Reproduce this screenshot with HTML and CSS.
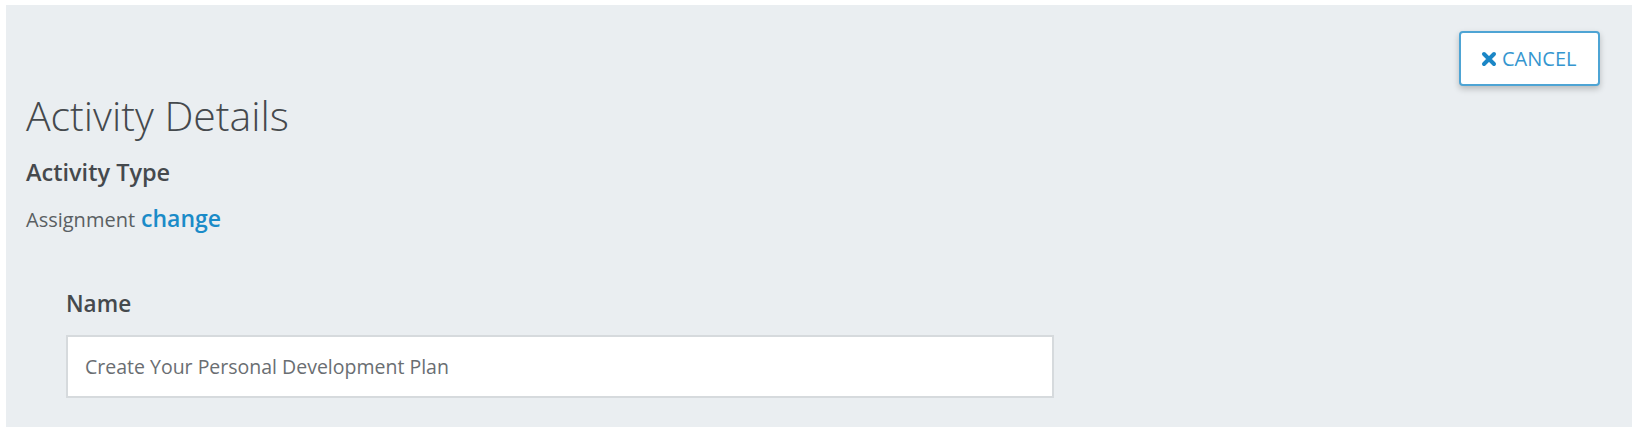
FILE: index.html
```
<!DOCTYPE html>
<html lang="en">
<head>
<meta charset="utf-8">
<title>Activity Details</title>
<link rel="stylesheet" href="styles.css">
</head>
<body>
<main class="panel">
  <div class="toolbar">
    <button class="cancel-btn" type="button">
      <svg class="cancel-icon" viewBox="0 0 16 16" width="16" height="16" aria-hidden="true">
        <path d="M3 3 L13 13 M13 3 L3 13" stroke="#1b86c6" stroke-width="4" stroke-linecap="round" fill="none"/>
      </svg>
      <span>CANCEL</span>
    </button>
  </div>
  <h1 class="title">Activity Details</h1>
  <h2 class="subtitle">Activity Type</h2>
  <p class="type-line"><span class="type-value">Assignment</span> <a class="change-link" href="#">change</a></p>
  <section class="form">
    <label class="field-label" for="name">Name</label>
    <input class="field-input" id="name" type="text" value="Create Your Personal Development Plan">
  </section>
</main>
</body>
</html>
```
FILE: styles.css
```
* { box-sizing: border-box; }
html, body { background: #ffffff; }
body {
  margin: 5px 8px 0 6px;
  font-family: "Open Sans", "Liberation Sans", sans-serif;
  color: #444a4f;
}
.panel {
  background: #eaeef1;
  height: 422px;
  padding: 26px 32px 29px 20px;
  display: flex;
  flex-direction: column;
}
.toolbar {
  display: flex;
  justify-content: flex-end;
}
.cancel-btn {
  width: 141px;
  height: 55px;
  background: #ffffff;
  border: 2px solid #4ea4d4;
  border-radius: 4px;
  box-shadow: 0 3px 6px rgba(0, 0, 0, 0.22);
  display: flex;
  align-items: center;
  gap: 5px;
  padding: 0 0 0 20px;
  font-family: "Open Sans", "Liberation Sans", sans-serif;
  font-size: 20px;
  color: #3596cf;
  cursor: pointer;
}
.cancel-icon { display: block; flex: none; }
.title {
  margin: 5px 0 0;
  font-size: 41px;
  font-weight: 300;
  line-height: 49px;
  color: #45494d;
}
.subtitle {
  margin: 17px 0 0;
  font-size: 23.5px;
  font-weight: 600;
  line-height: 30px;
  color: #45494d;
}
.type-line {
  margin: 16px 0 0;
  font-size: 23px;
  line-height: 30px;
}
.type-value {
  font-size: 20px;
  color: #5a5f63;
}
.change-link {
  color: #1a8bc8;
  font-weight: 600;
  text-decoration: none;
}
.form {
  margin-top: 55px;
  padding-left: 40px;
  display: flex;
  flex-direction: column;
}
.field-label {
  font-size: 22.5px;
  font-weight: 600;
  line-height: 28px;
  color: #45494d;
}
.field-input {
  margin-top: 17px;
  width: 988px;
  height: 63px;
  border: 2px solid #d6dadd;
  background: #ffffff;
  padding: 0 0 0 17px;
  font-family: "Open Sans", "Liberation Sans", sans-serif;
  font-size: 19.5px;
  color: #6a6e72;
  outline: none;
}
```
